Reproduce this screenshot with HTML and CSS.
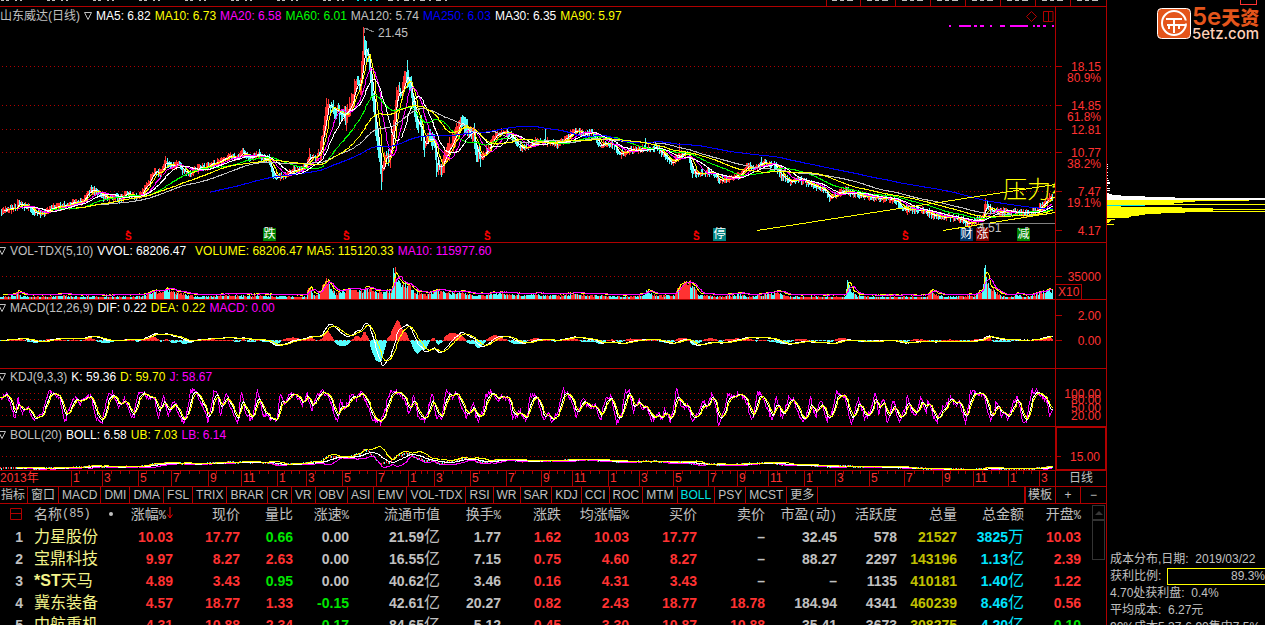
FILE: index.html
```html
<!DOCTYPE html>
<html lang="zh-CN">
<head>
    <meta charset="UTF-8">
    <meta name="viewport" content="width=device-width, initial-scale=1.0">
    <title>山东威达 日线</title>
    <link rel="stylesheet" href="styles.css">
</head>
<body>
<div class="app">
    <main class="main">
        <div class="top-strip">
            <svg class="chart" id="stripSvg" viewBox="0 0 1106 6" preserveAspectRatio="none"></svg>
        </div>

        <section class="panel price">
            <div class="plot">
                <div class="legend">
                    <span class="gray">山东威达(日线)</span>
                    <svg class="fold" width="8" height="8" viewBox="0 0 8 8"><path d="M0.5 0.5H7.5L4 7.5Z" fill="none" stroke="#c0c0c0"/></svg>
                    <span class="white">MA5: 6.82</span>
                    <span class="yellow">MA10: 6.73</span>
                    <span class="magenta">MA20: 6.58</span>
                    <span class="green">MA60: 6.01</span>
                    <span class="gray">MA120: 5.74</span>
                    <span class="blue">MA250: 6.03</span>
                    <span class="white">MA30: 6.35</span>
                    <span class="yellow">MA90: 5.97</span>
                </div>
                <svg class="chart" id="priceSvg" viewBox="0 7 1055 235" preserveAspectRatio="none"></svg>
                <div class="tools">
                    <svg width="28" height="12" viewBox="0 0 28 12"><path d="M5.5 0.5L10.5 5.5L5.5 10.5L0.5 5.5ZM17.5 0.5H27M17.5 0.5V10.5H27V0.5M22.5 0.5V10.5" fill="none" stroke="#b00000"/></svg>
                </div>
                <div class="marks" id="marks"></div>
            </div>
            <div class="axis" id="priceAxis"></div>
        </section>

        <section class="panel vol">
            <div class="plot">
                <div class="legend">
                    <svg class="fold" width="6" height="8" viewBox="2 0 6 8"><path d="M0.5 0.5H7.5L4 7.5Z" fill="none" stroke="#c0c0c0"/></svg>
                    <span class="gray">VOL-TDX(5,10)</span>
                    <span class="white wide">VVOL: 68206.47</span>
                    <span class="yellow">VOLUME: 68206.47</span>
                    <span class="yellow">MA5: 115120.33</span>
                    <span class="magenta">MA10: 115977.60</span>
                </div>
                <svg class="chart" id="volSvg" viewBox="0 243 1055 56" preserveAspectRatio="none"></svg>
            </div>
            <div class="axis" id="volAxis"><span class="unit">X10</span></div>
        </section>

        <section class="panel macd">
            <div class="plot">
                <div class="legend">
                    <svg class="fold" width="6" height="8" viewBox="2 0 6 8"><path d="M0.5 0.5H7.5L4 7.5Z" fill="none" stroke="#c0c0c0"/></svg>
                    <span class="gray">MACD(12,26,9)</span>
                    <span class="white">DIF: 0.22</span>
                    <span class="yellow">DEA: 0.22</span>
                    <span class="magenta">MACD: 0.00</span>
                </div>
                <svg class="chart" id="macdSvg" viewBox="0 300 1055 68" preserveAspectRatio="none"></svg>
            </div>
            <div class="axis" id="macdAxis"></div>
        </section>

        <section class="panel kdj">
            <div class="plot">
                <div class="legend">
                    <svg class="fold" width="6" height="8" viewBox="2 0 6 8"><path d="M0.5 0.5H7.5L4 7.5Z" fill="none" stroke="#c0c0c0"/></svg>
                    <span class="gray">KDJ(9,3,3)</span>
                    <span class="white">K: 59.36</span>
                    <span class="yellow">D: 59.70</span>
                    <span class="magenta">J: 58.67</span>
                </div>
                <svg class="chart" id="kdjSvg" viewBox="0 369 1055 57" preserveAspectRatio="none"></svg>
            </div>
            <div class="axis" id="kdjAxis"></div>
        </section>

        <section class="panel boll">
            <div class="plot">
                <div class="legend">
                    <svg class="fold" width="6" height="8" viewBox="2 0 6 8"><path d="M0.5 0.5H7.5L4 7.5Z" fill="none" stroke="#c0c0c0"/></svg>
                    <span class="gray">BOLL(20)</span>
                    <span class="white">BOLL: 6.58</span>
                    <span class="yellow">UB: 7.03</span>
                    <span class="magenta">LB: 6.14</span>
                </div>
                <svg class="chart" id="bollSvg" viewBox="0 427 1055 43" preserveAspectRatio="none"></svg>
            </div>
            <div class="axis selected" id="bollAxis"></div>
        </section>

        <div class="panel timeline">
            <div class="plot" id="timeline"><span class="year">2013年</span></div>
            <div class="axis period">日线</div>
        </div>

        <nav class="tabs">
            <button class="cn">指标</button><button class="cn">窗口</button><button>MACD</button><button>DMI</button><button>DMA</button><button>FSL</button><button>TRIX</button><button>BRAR</button><button>CR</button><button>VR</button><button>OBV</button><button>ASI</button><button>EMV</button><button>VOL-TDX</button><button>RSI</button><button>WR</button><button>SAR</button><button>KDJ</button><button>CCI</button><button>ROC</button><button>MTM</button><button class="active">BOLL</button><button>PSY</button><button>MCST</button><button>更多</button>
            <div class="tabs-right">
                <button class="template">模板</button><button class="zoom">+</button><button class="zoom">−</button>
            </div>
        </nav>

        <div class="list">
            <table class="quotes">
                <colgroup>
                    <col class="c23"><col class="c90"><col class="c60"><col class="c67"><col class="c53"><col class="c56"><col class="c91"><col class="c61"><col class="c60"><col class="c68"><col class="c68"><col class="c68"><col class="c72"><col class="c60"><col class="c60"><col class="c67"><col class="c57">
                </colgroup>
                <thead>
                    <tr>
                        <th><svg width="12" height="12" viewBox="0 0 12 12"><path d="M0.5 0.5H11.5V11.5H0.5ZM0.5 5.5H11.5" fill="none" stroke="#b00000"/></svg></th>
                        <th class="name"><div class="name-head">名称<small>(85)</small><i class="dot"></i></div></th>
                        <th class="sorted">涨幅<small>%</small><svg class="arrow" width="6" height="12" viewBox="0 0 6 12"><path d="M3 0V10M0.5 7.5L3 11L5.5 7.5" fill="none" stroke="#f00"/></svg></th>
                        <th>现价</th>
                        <th>量比</th>
                        <th>涨速<small>%</small></th>
                        <th>流通市值</th>
                        <th>换手<small>%</small></th>
                        <th>涨跌</th>
                        <th>均涨幅<small>%</small></th>
                        <th>买价</th>
                        <th>卖价</th>
                        <th>市盈<small>(</small>动<small>)</small></th>
                        <th>活跃度</th>
                        <th>总量</th>
                        <th>总金额</th>
                        <th>开盘<small>%</small></th>
                    </tr>
                </thead>
                <tbody>
                    <tr><td>1</td><td class="name">力星股份</td><td class="up">10.03</td><td class="up">17.77</td><td class="down">0.66</td><td>0.00</td><td>21.59<b>亿</b></td><td>1.77</td><td class="up">1.62</td><td class="up">10.03</td><td class="up">17.77</td><td>–</td><td>32.45</td><td>578</td><td class="total">21527</td><td class="amount">3825<b>万</b></td><td class="up">10.03</td></tr>
                    <tr><td>2</td><td class="name">宝鼎科技</td><td class="up">9.97</td><td class="up">8.27</td><td class="up">2.63</td><td>0.00</td><td>16.55<b>亿</b></td><td>7.15</td><td class="up">0.75</td><td class="up">4.60</td><td class="up">8.27</td><td>–</td><td>88.27</td><td>2297</td><td class="total">143196</td><td class="amount">1.13<b>亿</b></td><td class="up">2.39</td></tr>
                    <tr><td>3</td><td class="name"><strong>*ST</strong>天马</td><td class="up">4.89</td><td class="up">3.43</td><td class="down">0.95</td><td>0.00</td><td>40.62<b>亿</b></td><td>3.46</td><td class="up">0.16</td><td class="up">4.31</td><td class="up">3.43</td><td>–</td><td>–</td><td>1135</td><td class="total">410181</td><td class="amount">1.40<b>亿</b></td><td class="up">1.22</td></tr>
                    <tr><td>4</td><td class="name">冀东装备</td><td class="up">4.57</td><td class="up">18.77</td><td class="up">1.33</td><td class="down">-0.15</td><td>42.61<b>亿</b></td><td>20.27</td><td class="up">0.82</td><td class="up">2.43</td><td class="up">18.77</td><td class="up">18.78</td><td>184.94</td><td>4341</td><td class="total">460239</td><td class="amount">8.46<b>亿</b></td><td class="up">0.56</td></tr>
                    <tr><td>5</td><td class="name">中航重机</td><td class="up">4.31</td><td class="up">10.88</td><td class="up">2.34</td><td class="down">-0.17</td><td>84.65<b>亿</b></td><td>5.12</td><td class="up">0.45</td><td class="up">3.30</td><td class="up">10.87</td><td class="up">10.88</td><td>35.41</td><td>3673</td><td class="total">308275</td><td class="amount">4.20<b>亿</b></td><td class="down">0.10</td></tr>
                </tbody>
            </table>
            <div class="scrollbar">
                <button class="scroll-up" aria-label="向上滚动"><svg width="8" height="4" viewBox="0 0 8 4"><path d="M0 4L4 0L8 4Z" fill="#383838"/></svg></button>
                <div class="thumb"></div>
            </div>
        </div>
    </main>

    <aside class="side">
        <div class="brand">
            <svg class="brand-icon" width="34" height="31" viewBox="0 0 34 31">
                <rect x="0.5" y="0.5" width="33" height="30" rx="4" fill="#e4551b" stroke="#fff"/>
                <circle cx="17" cy="15" r="12" fill="none" stroke="#fff" stroke-width="2"/>
                <path d="M9 11H25M10 17H29M17 11V25M12 17V21M22 17V21" fill="none" stroke="#fff" stroke-width="2"/>
                <path d="M27 14H31" stroke="#e4551b" stroke-width="3"/>
            </svg>
            <div class="brand-text">
                <div class="brand-name">5e<span>天资</span></div>
                <div class="brand-url">5etz.com</div>
            </div>
            <div class="flag"></div>
        </div>
        <svg class="cost" id="costSvg" viewBox="0 160 158 70" preserveAspectRatio="none"></svg>
        <div class="cost-info">
            <div>成本分布,日期: &nbsp;2019/03/22</div>
            <div class="profit"><span>获利比例:</span><span class="profit-bar">89.3%</span></div>
            <div>4.70处获利盘: &nbsp;0.4%</div>
            <div>平均成本: &nbsp;6.27元</div>
            <div>90%成本5.37-6.90集中7.5%</div>
        </div>
    </aside>
</div>
<script src="chart.js"></script>
</body>
</html>
```
FILE: styles.css
```css
* {
    box-sizing: border-box;
}

body {
    margin: 0;
    background: #000;
    color: #c0c0c0;
    font-family: "Liberation Sans", "Noto Sans CJK SC", sans-serif;
    font-size: 12px;
    line-height: 16px;
}

button {
    background: none;
    border: none;
    padding: 0;
    color: inherit;
    font: inherit;
    cursor: pointer;
}

.app {
    display: flex;
    height: 100vh;
    overflow: hidden;
}

.main {
    flex: 1;
    min-width: 0;
    border-right: 1px solid #b00000;
}

.side {
    width: 158px;
    flex: none;
}

/* colours of the indicator lines */
.white { color: #fff; }
.gray { color: #c0c0c0; }
.yellow { color: #ff0; }
.magenta { color: #f0f; }
.green { color: #0f0; }
.blue { color: #00f; }

/* chart panels */
.top-strip {
    position: relative;
    height: 7px;
    border-bottom: 1px solid #b00000;
}

.panel {
    display: flex;
    border-bottom: 1px solid #b00000;
}

.price { height: 236px; }
.vol { height: 57px; }
.macd { height: 69px; }
.kdj { height: 58px; }
.boll { height: 44px; }
.timeline { height: 16px; }

.plot {
    position: relative;
    flex: 1;
    min-width: 0;
    overflow: hidden;
}

.axis {
    position: relative;
    width: 51px;
    flex: none;
    border-left: 1px solid #b00000;
    color: #ff3232;
}

.axis.selected {
    border: 2px solid #b00000;
    border-width: 1px 1px 1px 2px;
}

.chart {
    position: absolute;
    left: 0;
    top: 0;
    width: 100%;
    height: 100%;
    display: block;
    shape-rendering: crispEdges;
}

.legend {
    position: relative;
    z-index: 1;
    display: flex;
    align-items: center;
    gap: 4px;
    white-space: nowrap;
}

.price .legend {
    line-height: 18px;
}

.legend .wide {
    margin-right: 5px;
}

.tools {
    position: absolute;
    right: 1px;
    top: 4px;
}

.axis-label {
    position: absolute;
    right: 5px;
    line-height: 12px;
    margin-top: -6px;
}

.axis-label.tick::before {
    content: "";
    position: absolute;
    right: 39px;
    top: 5px;
    width: 6px;
    height: 1px;
    background: #b00000;
}

.unit {
    position: absolute;
    left: 0;
    bottom: 0;
    width: 26px;
    height: 15px;
    line-height: 15px;
    padding-left: 2px;
    border: 1px solid #b00000;
    border-width: 1px 1px 0 0;
}

/* marks pinned on the price chart */
.mark {
    position: absolute;
    white-space: nowrap;
}

.mark.badge {
    width: 13px;
    height: 13px;
    line-height: 13px;
    color: #fff;
    text-align: center;
}

.badge.fall { background: #008000; }
.badge.stop { background: #008080; }
.badge.fin { background: #003468; }
.badge.rise { background: #800000; }

.mark.pressure {
    color: #ff0;
    font-size: 24px;
    font-weight: 300;
    line-height: 24px;
}

.mark.value {
    color: #c0c0c0;
    line-height: 12px;
}

.mark.money {
    color: #f00;
    line-height: 11px;
    font-size: 10px;
    font-weight: bold;
}

.money::before {
    content: "";
    position: absolute;
    left: 1px;
    top: -1px;
    border: 2px solid transparent;
    border-top: none;
    border-bottom-color: #f00;
}

/* timeline */
.timeline {
    color: #ff3232;
    line-height: 15px;
}

.month {
    position: absolute;
    top: 0;
    height: 15px;
    padding-left: 1px;
    border-left: 1px solid #b00000;
}

.minor {
    position: absolute;
    top: 0;
    width: 1px;
    height: 3px;
    background: #b00000;
}

.period {
    color: #c0c0c0;
    text-align: center;
}

/* indicator tabs */
.tabs {
    display: flex;
    height: 17px;
    border-bottom: 1px solid #b00000;
}

.tabs button {
    padding: 0 3px;
    line-height: 16px;
    border-right: 1px solid #b00000;
}

.tabs .cn:first-child {
    padding: 0 2px 0 1px;
}

.tabs .active {
    color: #00e4e4;
}

.tabs-right {
    display: flex;
    margin-left: auto;
}

.tabs .template {
    border-left: 2px solid #b00000;
    padding: 0 3px 0 2px;
}

.tabs .zoom {
    width: 25px;
    padding: 0;
}

.tabs .zoom:last-child {
    border-right: none;
}

/* quote list */
.list {
    display: flex;
    align-items: flex-start;
}

.quotes {
    flex: 1;
    min-width: 0;
    table-layout: fixed;
    border-collapse: collapse;
}

.quotes th, .quotes td {
    padding: 0;
    text-align: right;
    white-space: nowrap;
}

.quotes th {
    height: 22px;
    font-size: 14px;
    font-weight: normal;
    line-height: 20px;
    vertical-align: top;
}

.quotes th svg {
    margin: 4px 1px 0 0;
}

.quotes th .arrow {
    margin: 0 0 0 1px;
}

.quotes small {
    font-family: "Liberation Mono", monospace;
    font-size: 12px;
}

.quotes td {
    height: 22px;
    font-size: 14px;
    font-weight: bold;
    line-height: 22px;
}

.quotes td b {
    font-size: 16px;
    font-weight: normal;
    line-height: 20px;
}

.quotes .name {
    padding-left: 11px;
    text-align: left;
}

.quotes td.name {
    color: #f4f48a;
    font-size: 16px;
    font-weight: normal;
}

.name-head {
    display: flex;
    align-items: center;
}

.dot {
    width: 4px;
    height: 4px;
    margin-left: auto;
    border-radius: 50%;
    background: #c0c0c0;
}

.quotes .up { color: #ff3232; }
.quotes .down { color: #00e600; }
.quotes .total { color: #c0c000; }
.quotes .amount { color: #00e4ff; }

.c23 { width: 23px; }
.c53 { width: 53px; }
.c56 { width: 56px; }
.c57 { width: 57px; }
.c60 { width: 60px; }
.c61 { width: 61px; }
.c67 { width: 67px; }
.c68 { width: 68px; }
.c72 { width: 72px; }
.c90 { width: 90px; }
.c91 { width: 91px; }

.scrollbar {
    width: 13px;
    margin: 1px 1px 0 11px;
}

.scroll-up, .thumb {
    display: flex;
    align-items: center;
    justify-content: center;
    width: 13px;
    height: 15px;
    border: 1px solid #333;
}

.thumb {
    height: 40px;
}

/* right side */
.brand {
    position: relative;
    display: flex;
    gap: 1px;
    height: 160px;
    padding: 8px 0 0 50px;
}

.flag {
    position: absolute;
    right: 8px;
    top: -1px;
    width: 17px;
    height: 6px;
    border: 1px solid #ff3232;
}

.brand-name {
    color: #e4551b;
    font-family: Inter, "Noto Sans CJK SC", sans-serif;
    font-size: 24px;
    font-weight: 600;
    line-height: 17px;
    white-space: nowrap;
}

.brand-name span {
    font-size: 19px;
    font-weight: 900;
}

.brand-url {
    color: #ffd0b8;
    font-family: Inter, sans-serif;
    font-size: 15px;
    font-weight: 500;
    line-height: 13px;
}

.cost {
    display: block;
    width: 100%;
    height: 70px;
    shape-rendering: crispEdges;
}

.cost-info {
    margin-top: 321px;
    padding-left: 3px;
    line-height: 17px;
    white-space: nowrap;
}

.profit {
    display: flex;
    justify-content: space-between;
}

.profit-bar {
    width: 98px;
    height: 17px;
    line-height: 15px;
    border: 1px solid #ff0;
    border-right: none;
    text-align: right;
}
```
FILE: chart.js
```javascript
const UP = "#ff3232", DOWN = "#54fcfc", GRID = "#b00000";
const STEP = 0.84;
const WIDTH = 1055;
const N = Math.floor(1053 / STEP);

// fixed seed, so that the chart is the same on each load
let seed = 7;
function rnd() {
    seed = (seed * 16807) % 2147483647;
    return seed / 2147483647;
}

const closeKeys = [[0,211],[8,209],[16,208],[18,203],[22,205],[30,208],[34,213],[42,214],[50,209],[58,206],[66,206],[72,203],[80,202],[86,196],[91,190],[97,192],[103,196],[108,199],[115,197],[120,199],[126,193],[134,196],[138,197],[143,190],[148,183],[154,171],[160,174],[165,162],[172,166],[178,164],[184,172],[190,173],[198,168],[206,167],[214,163],[222,160],[230,155],[236,159],[242,152],[250,158],[258,154],[264,160],[268,160],[271,168],[274,178],[280,176],[286,175],[292,171],[300,169],[306,163],[309,156],[315,158],[320,151],[324,125],[327,105],[330,107],[335,110],[340,113],[345,116],[349,108],[352,102],[356,83],[360,88],[363,45],[366,52],[369,62],[372,95],[375,120],[378,150],[381,175],[385,155],[389,158],[392,140],[395,105],[398,90],[401,95],[405,75],[408,80],[412,95],[416,122],[420,125],[424,148],[428,138],[434,142],[436,166],[441,167],[448,150],[455,136],[460,122],[463,125],[468,132],[473,133],[476,152],[481,158],[487,150],[493,138],[500,133],[507,132],[513,138],[520,148],[527,148],[534,142],[545,142],[557,144],[566,138],[574,131],[583,133],[594,134],[599,146],[605,143],[613,144],[619,154],[627,151],[638,149],[655,148],[663,154],[671,164],[679,155],[688,154],[692,172],[699,174],[712,172],[719,181],[730,178],[740,175],[746,166],[754,168],[762,163],[773,164],[781,176],[788,181],[800,180],[812,185],[824,190],[829,198],[840,192],[847,191],[860,196],[880,198],[895,200],[903,209],[915,210],[925,211],[935,216],[945,217],[955,218],[962,220],[966,224],[972,222],[982,218],[986,204],[990,210],[998,212],[1010,212],[1025,213],[1035,212],[1042,205],[1050,197],[1055,196]];

const volKeys = [[0,2],[15,3],[17,8],[21,3],[30,2],[50,2],[60,3],[80,2],[88,3],[100,2],[130,2],[145,3],[153,7],[158,5],[165,8],[172,6],[185,4],[200,2],[218,3],[240,3],[265,3],[300,2],[306,2],[308,11],[313,3],[320,7],[325,17],[330,11],[336,5],[345,7],[353,8],[362,7],[366,10],[374,6],[385,6],[392,8],[393,28],[395,28],[396,16],[401,13],[408,12],[416,6],[425,4],[435,7],[450,5],[462,6],[475,3],[500,5],[525,3],[535,4],[560,3],[575,4],[600,3],[620,2],[644,3],[646,8],[655,3],[675,3],[679,16],[682,13],[688,16],[693,12],[697,4],[720,2],[740,4],[750,2],[765,4],[778,6],[785,3],[800,2],[845,2],[847,22],[850,8],[856,3],[875,2],[927,2],[930,9],[935,4],[945,2],[975,3],[982,8],[985,29],[988,11],[993,8],[1000,3],[1010,2],[1017,4],[1025,2],[1035,4],[1045,7],[1055,8]];

const kdjKeys = [[0,398],[5,393],[8,400],[15,418],[17,397],[22,412],[28,408],[33,421],[42,413],[48,392],[52,394],[56,396],[60,398],[64,424],[70,405],[75,397],[80,404],[85,396],[91,398],[95,418],[102,422],[107,395],[113,393],[118,408],[124,398],[128,408],[133,420],[138,392],[144,393],[148,400],[153,396],[158,416],[163,396],[168,414],[174,401],[179,417],[183,423],[187,412],[190,390],[195,391],[200,402],[204,409],[208,423],[213,391],[217,394],[220,415],[226,392],[231,410],[237,423],[241,391],[246,417],[252,419],[257,390],[263,415],[268,416],[273,421],[277,419],[279,394],[285,404],[290,393],[296,397],[302,405],[307,391],[311,413],[316,395],[322,392],[329,398],[334,415],[337,423],[340,400],[344,410],[350,396],[357,398],[361,391],[367,405],[372,420],[380,422],[385,408],[390,392],[396,391],[404,400],[409,415],[413,395],[418,418],[425,420],[432,392],[435,415],[441,419],[446,389],[452,397],[456,394],[461,406],[466,417],[473,405],[477,421],[483,412],[485,395],[492,392],[497,402],[502,396],[508,399],[512,418],[520,412],[526,420],[530,396],[535,394],[541,414],[544,420],[548,410],[551,421],[557,412],[563,390],[570,398],[576,418],[582,398],[588,408],[595,405],[600,421],[605,398],[611,397],[616,424],[621,415],[625,392],[629,391],[633,413],[639,399],[642,412],[645,404],[651,420],[658,413],[662,420],[664,407],[670,424],[676,389],[681,407],[687,406],[692,420],[698,414],[703,400],[706,410],[712,391],[718,425],[724,410],[727,395],[732,397],[738,394],[745,398],[750,419],[753,419],[757,392],[762,395],[768,412],[772,420],[776,397],[782,420],[788,398],[794,401],[800,420],[805,421],[810,397],[815,417],[821,398],[826,422],[832,412],[836,390],[841,397],[844,396],[851,424],[858,397],[864,420],[870,412],[875,392],[878,415],[883,397],[887,424],[893,400],[899,422],[904,410],[907,398],[911,413],[916,415],[920,397],[926,412],[927,399],[936,424],[942,408],[950,398],[955,405],[959,400],[965,424],[970,391],[977,394],[984,395],[990,424],[996,400],[1001,416],[1004,410],[1007,420],[1012,405],[1017,394],[1022,422],[1026,422],[1031,390],[1037,392],[1043,398],[1047,402],[1049,415],[1055,404]];

function sample(keys, x) {
    let i = 1;
    while (i < keys.length - 1 && keys[i][0] < x) i++;
    const [x0, y0] = keys[i - 1], [x1, y1] = keys[i];
    return y0 + (y1 - y0) * (x - x0) / (x1 - x0);
}

function average(data, n) {
    return data.map((v, i) => {
        if (i < n - 1) return null;
        let sum = 0;
        for (let k = i - n + 1; k <= i; k++) sum += data[k];
        return sum / n;
    });
}

function ema(data, n) {
    let prev = data[0];
    return data.map(v => prev = prev + (v - prev) * 2 / (n + 1));
}

function px(i) {
    return Math.round(i * STEP) + 0.5;
}

function path(d, color, width = 1) {
    return `<path d="${d}" fill="none" stroke="${color}" stroke-width="${width}"/>`;
}

function line(data, color) {
    let d = "";
    data.forEach((v, i) => {
        if (v !== null) d += (d ? "L" : "M") + px(i) + " " + v.toFixed(1);
    });
    return path(d, color);
}

function grid(levels) {
    return levels.map(y => `<path d="M2 ${y + 0.5}H${WIDTH - 2}" stroke="${GRID}" stroke-dasharray="1 3"/>`).join("");
}

function draw(id, content) {
    document.getElementById(id).innerHTML = content;
}

function labels(id, top, items) {
    document.getElementById(id).insertAdjacentHTML("beforeend", items.map(([y, text, tick]) =>
        `<span class="axis-label${tick ? " tick" : ""}" style="top:${y - top}px">${text}</span>`).join(""));
}

// price
const close = [];
for (let i = 0; i < N; i++) close.push(sample(closeKeys, i * STEP) + (rnd() - 0.5) * 2);

const spikes = { 17: 199, 91: 185, 165: 156, 242: 148, 309: 148, 326: 98, 346: 131, 363: 27, 381: 190, 407: 60, 460: 117, 545: 129, 645: 138, 679: 143, 692: 178, 761: 157, 966: 226, 985: 198 };
let ups = "", downs = "";
for (let i = 1; i < N; i++) {
    const x = px(i), move = Math.abs(close[i] - close[i - 1]);
    const range = i * STEP > 320 && i * STEP < 480 ? 10 : 4;
    let a = Math.min(close[i], close[i - 1]) - rnd() * range - move * 0.3;
    let b = Math.max(close[i], close[i - 1]) + rnd() * range + move * 0.3;
    const spike = spikes[x - 0.5];
    if (spike) {
        a = Math.min(a, spike);
        b = Math.max(b, spike);
    }
    a = Math.max(a, 27);
    const d = `M${x} ${a.toFixed(0)}V${b.toFixed(0)}`;
    if (close[i] < close[i - 1]) ups += d; else downs += d;
}
draw("priceSvg",
    grid([66, 105, 129, 152, 191]) +
    path(downs, DOWN) + path(ups, UP) +
    line(average(close, 5), "#fff") +
    line(average(close, 10), "#ff0") +
    line(average(close, 20), "#f0f") +
    line(average(close, 60), "#0f0") +
    line(average(close, 120), "#c0c0c0") +
    line(average(close, 250), "#00f") +
    line(average(close, 30), "#fff") +
    line(average(close, 90), "#ff0") +
    path("M757 230.5L1055 184.5M943 230.5L1055 212.5", "#ff0") +
    path("M980 223.5H1055M364 28L374 32M364 28V33M364 28H368", "#808080") +
    `<path d="M949 26H951M959 26H971M974 26H977M980 26H984M990 26H992M1000 26H1005M1010 26H1028M1033 26H1035M1037 26H1040M1043 26H1046M1052 26H1054" stroke="#f0f" stroke-width="2"/>`
);
labels("priceAxis", 7, [[67, "18.15", 1], [78, "80.9%"], [106, "14.85", 1], [117, "61.8%"], [130, "12.81", 1], [153, "10.77", 1], [164, "38.2%"], [192, "7.47", 1], [203, "19.1%"], [231, "4.17", 1]]);

const marks = [
    [378, 27, "value", "21.45"], [978, 222, "value", "4.51"], [1003, 178, "pressure", "压力线"],
    [125, 231, "money", "S"], [343, 231, "money", "S"], [484, 231, "money", "S"], [693, 231, "money", "S"], [902, 231, "money", "S"],
    [263, 228, "badge fall", "跌"], [713, 228, "badge stop", "停"], [960, 228, "badge fin", "财"], [976, 228, "badge rise", "涨"], [1017, 228, "badge fall", "减"]
];
draw("marks", marks.map(([x, y, cls, text]) =>
    `<span class="mark ${cls}" style="left:${(x / WIDTH * 100).toFixed(2)}%;top:${y - 7}px">${text}</span>`).join(""));

// volume
const vol = [];
for (let i = 0; i < N; i++) vol.push(sample(volKeys, i * STEP) * (0.75 + rnd() * 0.6));
ups = downs = "";
let rising = true;
vol.forEach((v, i) => {
    if (rnd() < 0.35) rising = !rising;
    const at = i * STEP;
    if (at > 846 && at < 852 || at > 392 && at < 394.5) rising = false;
    if (at > 679 && at < 688 || at > 320 && at < 326) rising = true;
    const d = `M${px(i)} 299V${(299 - Math.max(v, 2)).toFixed(0)}`;
    if (rising) ups += d; else downs += d;
});
draw("volSvg", grid([276]) + path(ups, UP) + path(downs, DOWN) +
    line(average(vol, 5).map(v => v && 297 - v), "#ff0") +
    line(average(vol, 10).map(v => v && 297 - v), "#f0f"));
labels("volAxis", 243, [[277, "35000", 1]]);

// MACD
const price = close.map(y => 18.15 - (y - 67) / 11.66);
const slow = ema(price, 26);
const dif = ema(price, 12).map((v, i) => v - slow[i]);
const dea = ema(dif, 9);
ups = downs = "";
dif.forEach((v, i) => {
    const h = (v - dea[i]) * 25;
    if (h > 0) ups += `M${px(i)} 341V${(340 - h).toFixed(0)}`;
    else downs += `M${px(i)} 340V${(341 - h).toFixed(0)}`;
});
draw("macdSvg", path(downs, DOWN) + path(ups, UP) + grid([340]) +
    line(dif.map(v => 340 - v * 12.5), "#fff") +
    line(dea.map(v => 340 - v * 12.5), "#ff0"));
labels("macdAxis", 300, [[316, "2.00", 1], [341, "0.00", 1]]);

// KDJ
const j = [];
for (let i = 0; i < N; i++) j.push(Math.max(388, Math.min(425, sample(kdjKeys, i * STEP) + (rnd() - 0.5) * 5)));
const k = ema(j, 7).map(v => 406 + (v - 406) * 1.05);
const d = ema(k, 4);
draw("kdjSvg", grid([393, 399, 407, 415]) + line(j, "#f0f") + line(k, "#fff") + line(d, "#ff0"));
labels("kdjAxis", 369, [[394, "100.00"], [400, "80.00"], [408, "50.00"], [416, "20.00"]]);

// BOLL
const mid = average(price, 20);
const dev = price.map((v, i) => {
    if (mid[i] === null) return null;
    let sum = 0;
    for (let n = i - 19; n <= i; n++) sum += (price[n] - mid[i]) ** 2;
    return 2 * Math.sqrt(sum / 20);
});
function bollY(p) {
    return 456.5 + (15 - p) * 1.3;
}
ups = downs = "";
price.forEach((p, i) => {
    const bar = `M${px(i)} ${(bollY(p) - 1).toFixed(0)}v2`;
    if (i % 3 === 0) ups += bar; else if (i % 3 === 1) downs += bar;
});
draw("bollSvg", grid([456]) + path(downs, DOWN) + path(ups, UP) +
    line(mid.map((v, i) => v && bollY(v - dev[i])), "#f0f") +
    line(mid.map(v => v && bollY(v)), "#fff") +
    line(mid.map((v, i) => v && bollY(v + dev[i])), "#ff0"));
labels("bollAxis", 428, [[457, "15.00", 1]]);

// timeline
const months = [[71, 1], [102, 3], [138, 5], [171, 7], [208, 9], [241, 11], [277, 1], [306, 3], [342, 5], [376, 7], [408, 1], [434, 3], [470, 5], [506, 7], [541, 9], [572, 11], [608, 1], [639, 3], [673, 5], [708, 7], [737, 9], [768, 11], [804, 1], [835, 3], [869, 5], [904, 7], [942, 9], [973, 11], [1008, 1], [1039, 3]];
let ticks = "";
months.forEach(([x, text], i) => {
    ticks += `<span class="month" style="left:${(x / WIDTH * 100).toFixed(2)}%">${text}</span>`;
    const next = i < months.length - 1 ? months[i + 1][0] : 1055;
    for (let n = 1; n < 4; n++) {
        const at = x + (next - x) * n / 4;
        if (next < 1055) ticks += `<i class="minor" style="left:${(at / WIDTH * 100).toFixed(2)}%"></i>`;
    }
});
document.getElementById("timeline").insertAdjacentHTML("beforeend", ticks);

// lower edge of the menu above the chart
let strip = "";
for (let x = 0; x < 330; x += 46) strip += `M${x + 1} 0.5h3M${x + 6} 0.5h3M${x + 15} 0.5h2M${x + 20} 0.5h2`;
for (let x = 388; x < 450; x += 16) strip += `M${x} 0.5h5M${x + 9} 0.5h2`;
for (let x = 832; x < 1100; x += 35) strip += `M${x} 0.5h5M${x + 8} 0.5h4M${x + 15} 0.5h6`;
let cells = "";
for (const x of [826, 860, 895, 930, 965, 1000, 1035, 1070]) cells += `M${x + 0.5} 0V6`;
draw("stripSvg", path(strip, "#c0c0c0") + path(cells, GRID) + path("M357 0.5h2M364 0.5h2M370 0.5h2M376 0.5h2", "#00e4e4"));

// chips: [y, width]
const profitRows = [[164, 1], [166, 1], [168, 1], [172, 1], [175, 1], [178, 1], [180, 2], [182, 3], [183, 3], [185, 1], [188, 3], [190, 3], [193, 2], [194, 5], [195, 14], [196, 38], [197, 68], [198, 158], [199, 158]];
const lossRows = [[200, 142], [201, 88], [202, 76], [203, 67], [204, 158], [206, 14], [207, 75], [208, 106], [209, 158], [210, 106], [211, 158], [212, 78], [213, 54], [214, 38], [215, 32], [216, 24], [217, 22], [219, 8], [220, 4], [221, 3], [222, 2], [224, 7]];
const rows = list => list.map(([y, w]) => `M0 ${y + 0.5}H${w}`).join("");
draw("costSvg", path(rows(profitRows), "#fff") + path(rows(lossRows), "#ff0") + path("M0 205.5H38", "#00e4e4"));
```
